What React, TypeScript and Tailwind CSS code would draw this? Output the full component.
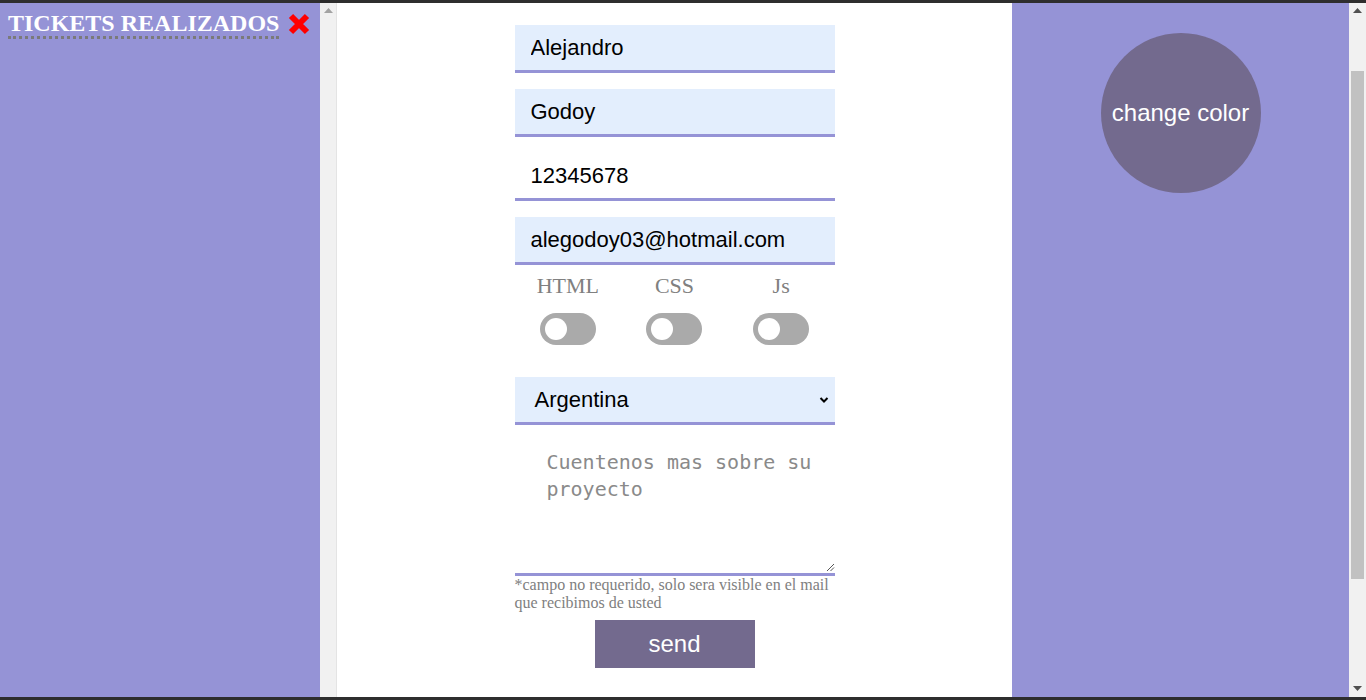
const purple = "bg-[#9593d6]";

const ArrowUp = ({ color }: { color: string }) => (
  <svg width="9" height="5" viewBox="0 0 9 5" className="mx-auto">
    <polygon points="0,5 9,5 4.5,0" fill={color} />
  </svg>
);

const ArrowDown = ({ color }: { color: string }) => (
  <svg width="9" height="5" viewBox="0 0 9 5" className="mx-auto">
    <polygon points="0,0 9,0 4.5,5" fill={color} />
  </svg>
);

const Toggle = () => (
  <div className="w-[56px] h-[32px] rounded-full bg-[#aaaaaa] flex items-center px-[5px]">
    <div className="w-[22px] h-[22px] rounded-full bg-white" />
  </div>
);

const Field = ({ value, filled = true }: { value: string; filled?: boolean }) => (
  <input
    readOnly
    value={value}
    className={`w-[320px] h-[48px] px-4 text-[22px] text-black border-b-[3px] border-[#9593d6] outline-none font-['Liberation_Sans',Arial,sans-serif] ${filled ? "bg-[#e3eefd]" : "bg-white"}`}
  />
);

export default function App() {
  return (
    <div className="h-[700px] w-[1366px] flex flex-col overflow-hidden">
      <div className="h-[3px] bg-[#2e2e2e]" />
      <div className="flex-1 flex min-h-0">
        {/* left panel */}
        <div className={`w-[320px] ${purple} pl-2 pt-[8px]`}>
          <div className="flex items-start gap-2">
            <h2 className="font-['Liberation_Serif','Times_New_Roman',serif] font-bold text-[24px] leading-[24px] text-white border-b-[3px] border-dotted border-[#7a7a7a] pb-[1px]">
              TICKETS REALIZADOS
            </h2>
            <svg width="24" height="24" viewBox="0 0 24 24" className="mt-[1px]">
              <path d="M4 4 L20 20 M20 4 L4 20" stroke="#ff0000" strokeWidth="6" />
            </svg>
          </div>
        </div>
        <div className="w-[17px] bg-[#f1f1f1] border-r border-[#e4e4e4] pt-[5px]">
          <ArrowUp color="#a3a3a3" />
        </div>

        {/* main form */}
        <div className="w-[675px] bg-white flex flex-col items-center pt-[22px]">
          <div className="w-[320px] flex flex-col gap-4">
            <Field value="Alejandro" />
            <Field value="Godoy" />
            <Field value="12345678" filled={false} />
            <Field value="alegodoy03@hotmail.com" />
          </div>
          <div className="w-[320px] grid grid-cols-3 mt-[9px] font-['Liberation_Serif','Times_New_Roman',serif] text-[22px] text-[#808080]">
            {["HTML", "CSS", "Js"].map((l) => (
              <div key={l} className="flex flex-col items-center">
                <span className="leading-[24px]">{l}</span>
                <div className="mt-[15px]">
                  <Toggle />
                </div>
              </div>
            ))}
          </div>
          <div className="w-[320px] mt-[32px] h-[48px] bg-[#e3eefd] border-b-[3px] border-[#9593d6] flex items-center pl-5 pr-[6px] font-['Liberation_Sans',Arial,sans-serif] text-[22px] text-black">
            <span className="flex-1">Argentina</span>
            <svg width="10" height="8" viewBox="0 0 10 8">
              <path d="M1.5 2 L5 5.5 L8.5 2" stroke="#000" strokeWidth="2" fill="none" />
            </svg>
          </div>
          <div className="w-[320px] mt-[16px] h-[135px] border-b-[3px] border-[#9593d6] relative pl-8 pr-2 pt-[8px] font-['DejaVu_Sans_Mono',monospace] text-[20px] leading-[27px] text-[#8a8a8a]">
            Cuentenos mas sobre su proyecto
            <svg width="9" height="9" viewBox="0 0 9 9" className="absolute right-0 bottom-[1px]">
              <path d="M1 8 L8 1 M4.5 8 L8 4.5" stroke="#555" strokeWidth="1" />
            </svg>
          </div>
          <p className="w-[320px] font-['Liberation_Serif','Times_New_Roman',serif] text-[16px] leading-[18px] text-[#808080]">
            *campo no requerido, solo sera visible en el mail que recibimos de usted
          </p>
          <button className="mt-[8px] w-[160px] h-[48px] bg-[#736a8e] text-white text-[24px] font-['Liberation_Sans',Arial,sans-serif]">
            send
          </button>
        </div>

        {/* right panel */}
        <div className={`flex-1 ${purple} flex justify-center pt-[30px]`}>
          <div className="w-[160px] h-[160px] rounded-full bg-[#736a8e] flex items-center justify-center text-white text-[24px] font-['Liberation_Sans',Arial,sans-serif]">
            change color
          </div>
        </div>
        <div className="w-[17px] bg-[#f1f1f1] flex flex-col pt-[5px] pb-[6px]">
          <ArrowUp color="#505050" />
          <div className="mt-[58px] mx-[2px] h-[508px] bg-[#c1c1c1]" />
          <div className="flex-1" />
          <ArrowDown color="#505050" />
        </div>
      </div>
      <div className="h-[3px] bg-[#2e2e2e]" />
    </div>
  );
}
